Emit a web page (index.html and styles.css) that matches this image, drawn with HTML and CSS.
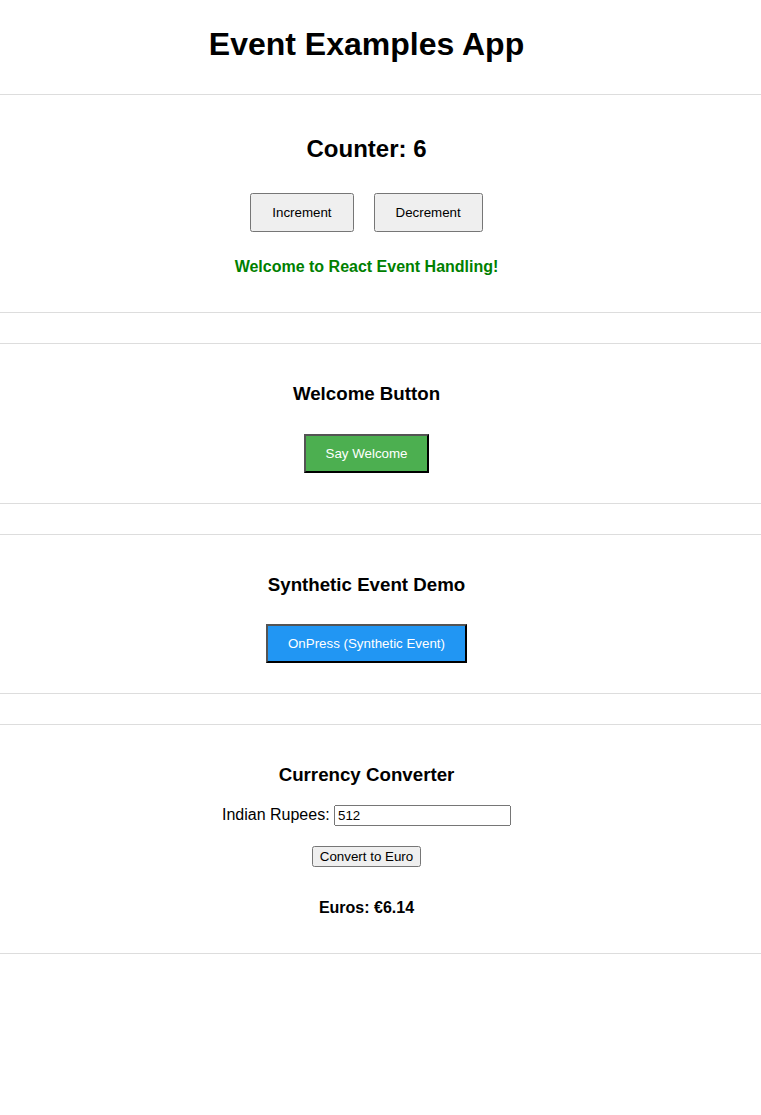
FILE: index.html
```html
<!DOCTYPE html>
<html lang="en">
<head>
<meta charset="utf-8">
<title>Event Examples App</title>
<link rel="stylesheet" href="styles.css">
</head>
<body>
<div class="app">
  <header class="app-header">
    <h1 class="app-title">Event Examples App</h1>
  </header>

  <section class="panel">
    <h2 class="counter-title">Counter: 6</h2>
    <div class="btn-row"><button class="btn">Increment</button><button class="btn">Decrement</button></div>
    <p class="welcome-msg">Welcome to React Event Handling!</p>
  </section>

  <section class="panel">
    <h3 class="panel-title">Welcome Button</h3>
    <div class="btn-row"><button class="btn btn-green">Say Welcome</button></div>
  </section>

  <section class="panel">
    <h3 class="panel-title">Synthetic Event Demo</h3>
    <div class="btn-row"><button class="btn btn-blue">OnPress (Synthetic Event)</button></div>
  </section>

  <section class="panel">
    <h3 class="panel-title">Currency Converter</h3>
    <div class="field-row"><label class="field-label" for="inr">Indian Rupees:</label> <input class="field-input" id="inr" type="text" value="512"></div>
    <div class="convert-row"><button class="convert-btn">Convert to Euro</button></div>
    <p class="result">Euros: €6.14</p>
  </section>
</div>
</body>
</html>
```

FILE: styles.css
```css
body {
  margin: 0;
  background: #ffffff;
  color: #000000;
  font-family: "Liberation Sans", Arial, sans-serif;
}

.app-header {
  padding: 26px 28px 31px 0;
  text-align: center;
}

.app-title {
  margin: 0;
  font-size: 32px;
  line-height: 37px;
  font-weight: bold;
}

.panel {
  border-top: 1px solid #dddddd;
  border-bottom: 1px solid #dddddd;
  padding: 20px 28px 20px 0;
  text-align: center;
}

.panel + .panel {
  margin-top: 30px;
}

.counter-title {
  margin: 20px 0;
  font-size: 24px;
  line-height: 28px;
  font-weight: bold;
}

.panel-title {
  margin: 19px 0;
  font-size: 18.72px;
  line-height: 21.5px;
  font-weight: bold;
}

.btn {
  margin: 10px;
  padding: 10px 20px;
  font-family: "Liberation Sans", Arial, sans-serif;
  font-size: 13.333px;
}

.btn-green {
  background-color: #4caf50;
  color: #ffffff;
}

.btn-blue {
  background-color: #2196f3;
  color: #ffffff;
}

.welcome-msg {
  margin: 16px 0;
  color: #008000;
  font-size: 16px;
  line-height: 18px;
  font-weight: bold;
}

.field-row {
  font-size: 16px;
}

.field-input {
  box-sizing: border-box;
  width: 177px;
  font-family: "Liberation Sans", Arial, sans-serif;
  font-size: 13.333px;
}

.convert-row {
  padding-top: 20px;
}

.convert-btn {
  font-family: "Liberation Sans", Arial, sans-serif;
  font-size: 13.333px;
}

.result {
  margin: 32.5px 0 16px;
  font-size: 16px;
  font-weight: bold;
}
```
